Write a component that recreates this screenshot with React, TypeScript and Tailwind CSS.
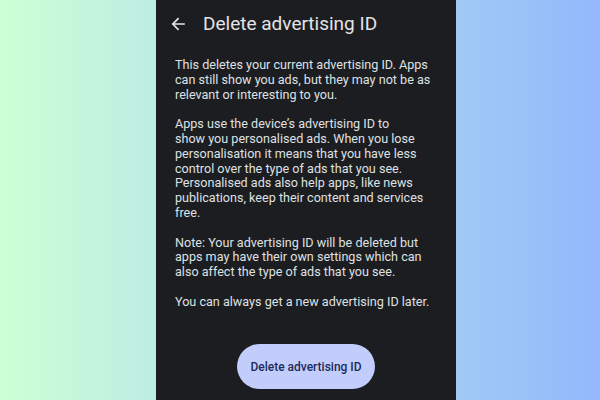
import React from "react";

export default function App() {
  return (
    <div
      className="w-[600px] h-[400px] flex pl-[156px] overflow-hidden bg-gradient-to-r from-[#cdffd6] to-[#94b8fc]"
      style={{ fontFamily: "Roboto, 'Noto Sans', sans-serif" }}
    >
      <div className="w-[300px] h-full bg-[#1c1d20] flex flex-col">
        <div className="flex items-center h-[48px] pl-[15px]">
          <svg width="14" height="14" viewBox="0 0 14 14" className="text-[#e3e3e6]">
            <path d="M13 7H2M7 1.8L1.8 7 7 12.2" fill="none" stroke="currentColor" strokeWidth="1.7" strokeLinecap="square" />
          </svg>
          <div className="ml-[18px] text-[19px] text-[#e4e3e6]">Delete advertising ID</div>
        </div>
        <div className="pl-[19px] pr-[10px] pt-[10px] text-[12.6px] leading-[14.8px] text-[#dfe0e3] whitespace-nowrap">
          <p>
            This deletes your current advertising ID. Apps<br />
            can still show you ads, but they may not be as<br />
            relevant or interesting to you.
          </p>
          <p className="mt-[14.8px]">
            Apps use the device’s advertising ID to<br />
            show you personalised ads. When you lose<br />
            personalisation it means that you have less<br />
            control over the type of ads that you see.<br />
            Personalised ads also help apps, like news<br />
            publications, keep their content and services<br />
            free.
          </p>
          <p className="mt-[14.8px]">
            Note: Your advertising ID will be deleted but<br />
            apps may have their own settings which can<br />
            also affect the type of ads that you see.
          </p>
          <p className="mt-[14.8px]">You can always get a new advertising ID later.</p>
        </div>
        <div className="flex justify-center mt-auto mb-[11px]">
          <button className="h-[45px] w-[138px] rounded-full bg-[#c3cdfb] text-[#1d2b5c] text-[12px] font-medium">
            Delete advertising ID
          </button>
        </div>
      </div>
    </div>
  );
}
